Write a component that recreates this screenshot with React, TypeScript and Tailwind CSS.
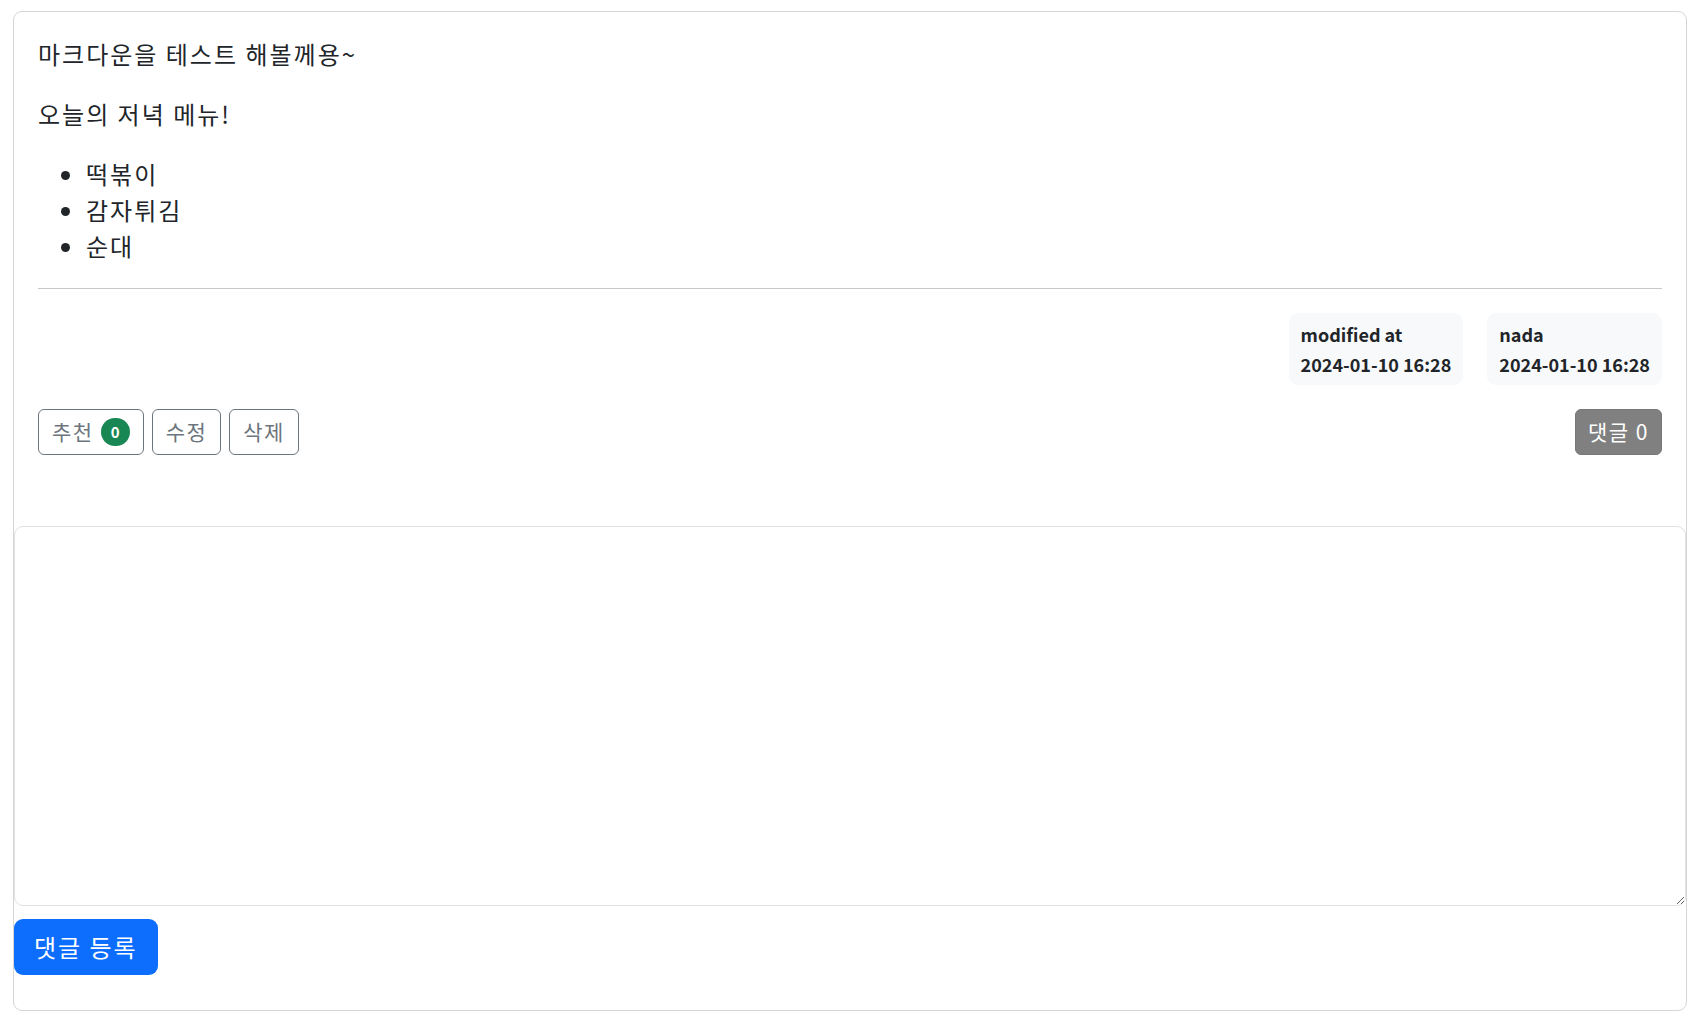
import React from "react"

const menu = ["떡볶이", "감자튀김", "순대"]

function MetaBox({ label, value }: { label: string; value: string }) {
  return (
    <div className="bg-[#f8f9fa] rounded-[9px] px-[12px] py-[6px] text-[18px] leading-[30px] font-bold text-[#212529]">
      <div>{label}</div>
      <div>{value}</div>
    </div>
  )
}

export default function App() {
  return (
    <div
      className="min-h-screen bg-white pt-[11px] pl-[13px]"
      style={{ fontFamily: '"Noto Sans CJK KR", "Noto Sans", sans-serif' }}
    >
      <div className="w-[1674px] h-[1000px] border border-[#d6d6d6] rounded-[9px] flex flex-col">
        {/* post body */}
        <div className="px-[24px] pt-[24px] pb-[24px] text-[#212529]">
          <div className="text-[24px] leading-[36px] tracking-[2px]">
            <p className="mb-[24px]">마크다운을 테스트 해볼께용~</p>
            <p className="mb-[24px]">오늘의 저녁 메뉴!</p>
            <ul className="list-disc pl-[48px] mb-[24px]">
              {menu.map((item) => (
                <li key={item}>{item}</li>
              ))}
            </ul>
          </div>
          <hr className="border-0 border-t border-[#c8c8c8] mb-[24px]" />

          <div className="flex justify-end gap-[24px]">
            <MetaBox label="modified at" value="2024-01-10 16:28" />
            <MetaBox label="nada" value="2024-01-10 16:28" />
          </div>

          <div className="flex justify-between items-center mt-[24px]">
            <div className="flex gap-[8px]">
              <button className="h-[46px] px-[13px] border border-[#6c757d] rounded-[6px] text-[#6c757d] text-[21px] tracking-[1.5px] flex items-center gap-[7px]">
                추천
                <span className="bg-[#198754] text-white text-[15px] font-bold tracking-normal rounded-full h-[28px] min-w-[29px] px-[9px] flex items-center justify-center">
                  0
                </span>
              </button>
              <button className="h-[46px] px-[13px] border border-[#6c757d] rounded-[6px] text-[#6c757d] text-[21px] tracking-[1.5px]">
                수정
              </button>
              <button className="h-[46px] px-[13px] border border-[#6c757d] rounded-[6px] text-[#6c757d] text-[21px] tracking-[1.5px]">
                삭제
              </button>
            </div>
            <button className="h-[46px] px-[12px] bg-[#808080] border border-[#777777] rounded-[6px] text-white text-[21px] tracking-[1.5px]">
              댓글 0
            </button>
          </div>
        </div>

        {/* comment form */}
        <div className="mt-[47px]">
          <textarea className="block w-full h-[380px] border border-[#dee2e6] rounded-[9px] p-[12px] text-[24px] outline-none" />
          <button className="mt-[13px] h-[56px] px-[20px] bg-[#0d6efd] text-white text-[24px] tracking-[2px] rounded-[9px]">
            댓글 등록
          </button>
        </div>
      </div>
    </div>
  )
}
